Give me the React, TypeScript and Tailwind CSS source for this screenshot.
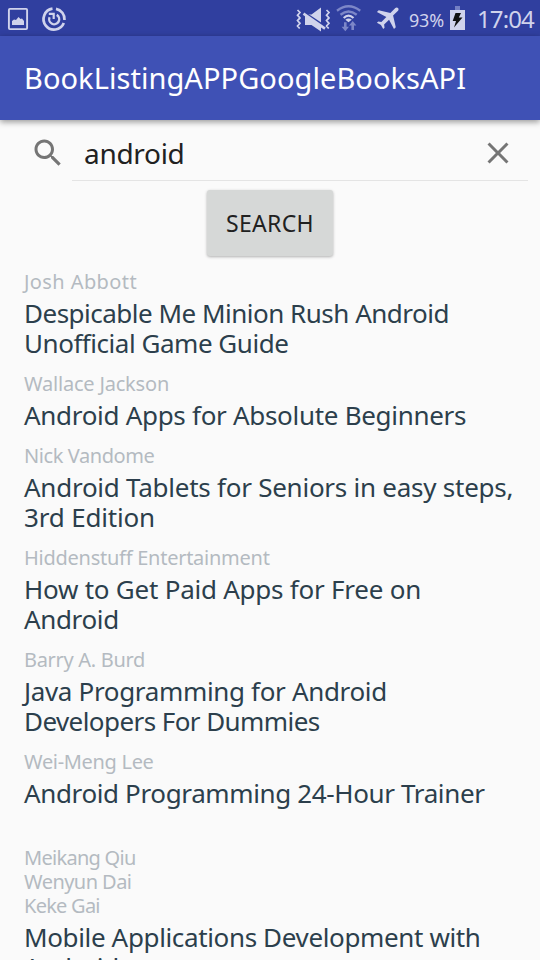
import React from "react";

type Line = { text: string; cls: string };
type Book = { authors: Line[]; title: Line[] };

const l = (text: string, cls = ""): Line => ({ text, cls });

const books: Book[] = [
  {
    authors: [l("Josh Abbott", "tracking-[0.4px]")],
    title: [l("Despicable Me Minion Rush Android", "tracking-[-0.5px]"), l("Unofficial Game Guide", "tracking-[-0.47px]")],
  },
  {
    authors: [l("Wallace Jackson", "tracking-[-0.2px]")],
    title: [l("Android Apps for Absolute Beginners", "tracking-[-0.3px]")],
  },
  {
    authors: [l("Nick Vandome", "tracking-[-0.42px]")],
    title: [l("Android Tablets for Seniors in easy steps,", "tracking-[-0.25px]"), l("3rd Edition", "tracking-[-0.17px]")],
  },
  {
    authors: [l("Hiddenstuff Entertainment", "tracking-[-0.26px]")],
    title: [l("How to Get Paid Apps for Free on", "tracking-[-0.24px]"), l("Android", "tracking-[-0.36px]")],
  },
  {
    authors: [l("Barry A. Burd", "tracking-[-0.3px]")],
    title: [l("Java Programming for Android", "tracking-[-0.34px]"), l("Developers For Dummies", "tracking-[-0.57px]")],
  },
  {
    authors: [l("Wei-Meng Lee", "tracking-[-0.32px]")],
    title: [l("Android Programming 24-Hour Trainer", "tracking-[-0.37px]")],
  },
  {
    authors: [
      l("\u00a0"),
      l("Meikang Qiu", "tracking-[-0.72px]"),
      l("Wenyun Dai", "tracking-[-0.55px]"),
      l("Keke Gai", "tracking-[-0.75px]"),
    ],
    title: [l("Mobile Applications Development with", "tracking-[-0.36px]"), l("Android", "tracking-[-0.36px]")],
  },
];

function Lines({ lines }: { lines: Line[] }) {
  return (
    <>
      {lines.map((line) => (
        <div key={line.text} className={`whitespace-nowrap ${line.cls}`}>
          {line.text}
        </div>
      ))}
    </>
  );
}

function StatusBar() {
  return (
    <div className="flex h-9 shrink-0 items-center bg-[#303f9f] text-[#d0d3ec]">
      {/* screenshot and sync notifications */}
      <svg className="h-9 w-[72px]" viewBox="0 0 72 36" fill="none" stroke="currentColor">
        <rect x="8.900" y="8.900" width="18.200" height="20.200" rx="1" strokeWidth="1.900" />
        <path d="M12 25v-4l2-1.500 2 .5 2.500-3 2 2 1.500-.5 2 2.500V25z" fill="currentColor" stroke="none" />
        <path d="M52.500 8.700A10.500 10.500 0 1 0 63.800 23" strokeWidth="2.700" />
        <path d="M56 8.800A10.500 10.500 0 0 1 64.500 20" strokeWidth="2.700" />
        <path d="M56.700 14.900A5 5 0 1 1 49.600 17.200" strokeWidth="2.400" />
        <path d="M48.800 13.900h4.900v5.200" strokeWidth="2.200" />
      </svg>
      {/* vibrate, wifi, airplane */}
      <svg className="ml-auto h-9 w-[117px]" viewBox="291 0 117 36" fill="none" stroke="currentColor">
        <path d="M297.500 10l2.500 2.500-2.500 2.700 2.500 2.700-2.500 2.700 2.500 2.700-2.500 2.700 2.200 2.500M326.500 10l2.500 2.500-2.500 2.700 2.500 2.700-2.500 2.700 2.500 2.700-2.500 2.700 2.200 2.500" strokeWidth="1.700" />
        <path d="M305 14.500h6.500L321 7.500v24l-9.500-6.500H305z" fill="currentColor" stroke="none" />
        <path d="M302.500 11.300L325 26.500" stroke="#303f9f" strokeWidth="2.200" />
        <path d="M303.500 13.600L325 28.600" strokeWidth="2.600" />
        <g stroke="#7d87c8" strokeWidth="2.400">
          <path d="M337 10.800Q348.500 1.800 360.200 10.800" />
          <path d="M340.500 14.800Q348.500 8.300 356.700 14.800" />
        </g>
        <path d="M343.700 18Q348.500 13.400 353.500 18" strokeWidth="2.200" />
        <path d="M345.400 19.700Q348.500 17.400 351.800 19.700L348.500 22.300z" fill="currentColor" stroke="none" />
        <path d="M344 22.300h2.600v4.400h2.400L345.300 31.300 341.600 26.700h2.400zM351.400 30h2.600v-4.400h2.400L352.700 21 349 25.600h2.400z" fill="#7d87c8" stroke="none" />
        <g transform="translate(389.5 17.4) rotate(45) scale(1.27) translate(-12 -12)">
          <path d="M21 16v-2l-8-5V3.500c0-.83-.67-1.500-1.500-1.500S10 2.670 10 3.500V9l-8 5v2l8-2.500V19l-2 1.500V22l3.500-1 3.500 1v-1.500L13 19v-5.500l8 2.500z" fill="currentColor" stroke="none" />
        </g>
      </svg>
      <span className="mt-[3px] w-[42px] whitespace-nowrap pl-px text-[18px] leading-6 tracking-[-0.2px]">93%</span>
      <svg className="h-9 w-4" viewBox="450 0 16 36">
        <path d="M455 6h5v4h-5z" fill="#7480c4" />
        <path d="M450 10h15v20h-15z" fill="currentColor" />
        <path d="M455.500 13h5.500l-2.200 4.500h3.700L454 27.500l2-6.500h-3.300z" fill="#111" />
      </svg>
      <span className="mt-0.5 w-[74px] whitespace-nowrap pl-[11px] text-[24px] leading-8 tracking-[-0.9px]">17:04</span>
    </div>
  );
}

export default function App() {
  return (
    <div className="flex h-[960px] w-[540px] flex-col overflow-hidden bg-[#fafafa] font-['Noto_Sans',sans-serif]">
      <StatusBar />
      <header className="flex h-[84px] shrink-0 items-center bg-[#3f51b5] pl-6 text-[29px] tracking-[0.06px] text-white shadow-[0_2px_6px_rgba(0,0,0,0.4)]">
        BookListingAPPGoogleBooksAPI
      </header>
      <div className="flex h-[61px] shrink-0 items-stretch pl-[30px] pr-3">
        <svg className="mt-[15px] size-9 shrink-0" viewBox="0 0 24 24" fill="#757575">
          <path d="M15.500 14h-.79l-.28-.27C15.410 12.590 16 11.110 16 9.500 16 5.910 13.090 3 9.500 3S3 5.910 3 9.500 5.910 16 9.500 16c1.610 0 3.090-.59 4.230-1.570l.27.28v.79l5 4.990L20.490 19l-4.990-5zm-6 0C7.010 14 5 11.990 5 9.500S7.010 5 9.500 5 14 7.010 14 9.500 11.990 14 9.500 14z" />
        </svg>
        <div className="ml-1.5 flex flex-1 items-center justify-between border-b border-[#e4e4e4] pl-3 pr-3 pt-[6px]">
          <span className="text-[28px] tracking-[-0.3px] text-[#212121]">android</span>
          <svg className="size-9" viewBox="0 0 24 24" fill="#757575">
            <path d="M19 6.410L17.590 5 12 10.590 6.410 5 5 6.410 10.590 12 5 17.590 6.410 19 12 13.410 17.590 19 19 17.590 13.410 12z" />
          </svg>
        </div>
      </div>
      <div className="flex h-[89px] shrink-0 items-start justify-center pt-[9px]">
        <button className="h-[66px] w-[126px] rounded-[3px] bg-[#d6d8d7] pt-px text-[23px] tracking-[0.3px] text-[#212121] shadow-[0_1px_3px_rgba(0,0,0,0.3)]">
          SEARCH
        </button>
      </div>
      <div className="flex flex-col px-6">
        {books.map((b) => (
          <div key={b.title[0].text} className="pb-[14px]">
            <div className="text-[20px] leading-6 text-[#b4bac1]">
              <Lines lines={b.authors} />
            </div>
            <div className="mt-1 text-[26px] leading-[30px] text-[#2c3f4c]">
              <Lines lines={b.title} />
            </div>
          </div>
        ))}
      </div>
    </div>
  );
}
